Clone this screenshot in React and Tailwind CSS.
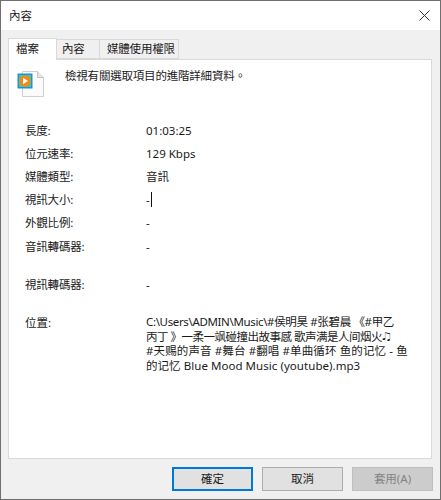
const rows = [
  { label: "長度:", value: "01:03:25", cls: "h-[23px]" },
  { label: "位元速率:", value: "129 Kbps", cls: "h-[23px]" },
  { label: "媒體類型:", value: "音訊", cls: "h-[23px]" },
  { label: "視訊大小:", value: "-", cls: "h-[23px]", caret: true },
  { label: "外觀比例:", value: "-", cls: "h-[24px]" },
  { label: "音訊轉碼器:", value: "-", cls: "h-[38px]" },
  { label: "視訊轉碼器:", value: "-", cls: "h-[39px]" },
];

const pathLines = [
  { t: "C:\\Users\\ADMIN\\Music\\#侯明昊 #张碧晨 《#甲乙", c: "tracking-[-0.35px]" },
  { t: "丙丁 》一柔一飒碰撞出故事感 歌声满是人间烟火🎝", c: "tracking-[-0.5px]" },
  { t: "#天赐的声音 #舞台 #翻唱 #单曲循环 鱼的记忆 - 鱼", c: "tracking-[0.12px]" },
  { t: "的记忆 Blue Mood Music (youtube).mp3", c: "tracking-[0.05px]" },
];

function FileIcon() {
  return (
    <svg width="28" height="29" viewBox="0 0 28 29" className="block shrink-0">
      <path d="M5.5 1.5h15l6 6v19h-21z" fill="#fbfbfb" stroke="#cfcfcf" />
      <path d="M20.5 1.5v6h6" fill="#e6e6e6" stroke="#c4c4c4" />
      <rect x="0.5" y="3.5" width="15" height="15" fill="#1f8fe6" />
      <rect x="2" y="5" width="12" height="12" fill="#5fbf8a" />
      <circle cx="8" cy="11" r="5.5" fill="#f28a12" />
      <path d="M6 7.8l5 3.2-5 3.2z" fill="#ffffff" />
    </svg>
  );
}

export default function App() {
  return (
    <div className="w-[441px] h-[500px] flex flex-col bg-[#f0f0f0] border border-[#6f6f6f] text-[11.5px] text-[#1a1a1a] font-['Noto_Sans','Noto_Sans_CJK_TC',sans-serif]">
      <div className="h-[29px] bg-white flex items-center justify-between pl-[8px] pr-[10px] shrink-0">
        <span className="leading-none">內容</span>
        <svg width="11" height="11" viewBox="0 0 11 11">
          <path d="M.5.5l10 10M10.5.5l-10 10" stroke="#333" fill="none" />
        </svg>
      </div>
      <div className="flex-1 flex flex-col px-[7px] pt-[7px] min-h-0">
        <div className="flex items-end h-[22px] relative z-10 shrink-0">
          <div className="w-[49px] h-[22px] pb-[2px] pl-[7px] bg-white border border-b-0 border-[#d9d9d9] flex items-center mb-[-1px]">檔案</div>
          <div className="w-[43px] h-[20px] pl-[5px] bg-[#f0f0f0] border border-l-0 border-[#d9d9d9] flex items-center tracking-[-0.2px]">內容</div>
          <div className="w-[79px] h-[20px] pl-[7px] bg-[#f0f0f0] border border-l-0 border-[#d9d9d9] flex items-center tracking-[-0.2px]">媒體使用權限</div>
        </div>
        <div className="h-[400px] w-[424px] bg-white border border-[#d9d9d9] shrink-0 pl-[8px]">
          <div className="flex h-[42px] pt-[10px]">
            <FileIcon />
            <span className="ml-[20px] mt-[-3px] leading-[18px] tracking-[-0.2px]">檢視有關選取項目的進階詳細資料。</span>
          </div>
          <div className="pt-[20px] pl-[8px]">
            {rows.map((r) => (
              <div key={r.label} className={`flex ${r.cls}`}>
                <span className="w-[121px] leading-[18px] tracking-[-0.2px]">{r.label}</span>
                <span className="leading-[18px] flex">
                  {r.value}
                  {r.caret && <span className="w-px h-[15px] mt-[1px] ml-[1px] bg-[#111]" />}
                </span>
              </div>
            ))}
            <div className="flex">
              <span className="w-[121px] leading-[15px]">位置:</span>
              <div className="flex flex-col leading-[14.7px] whitespace-nowrap">
                {pathLines.map((l) => (
                  <span key={l.t} className={l.c}>{l.t}</span>
                ))}
              </div>
            </div>
          </div>
        </div>
        <div className="flex justify-end gap-[9px] pt-[8px]">
          <button className="w-[81px] h-[24px] bg-[#e1e1e1] border-2 border-[#0078d7] flex items-center justify-center">確定</button>
          <button className="w-[81px] h-[24px] bg-[#e1e1e1] border border-[#adadad] flex items-center justify-center">取消</button>
          <button className="w-[81px] h-[24px] bg-[#cccccc] border border-[#bfbfbf] text-[#838383] flex items-center justify-center">套用(A)</button>
        </div>
      </div>
    </div>
  );
}
